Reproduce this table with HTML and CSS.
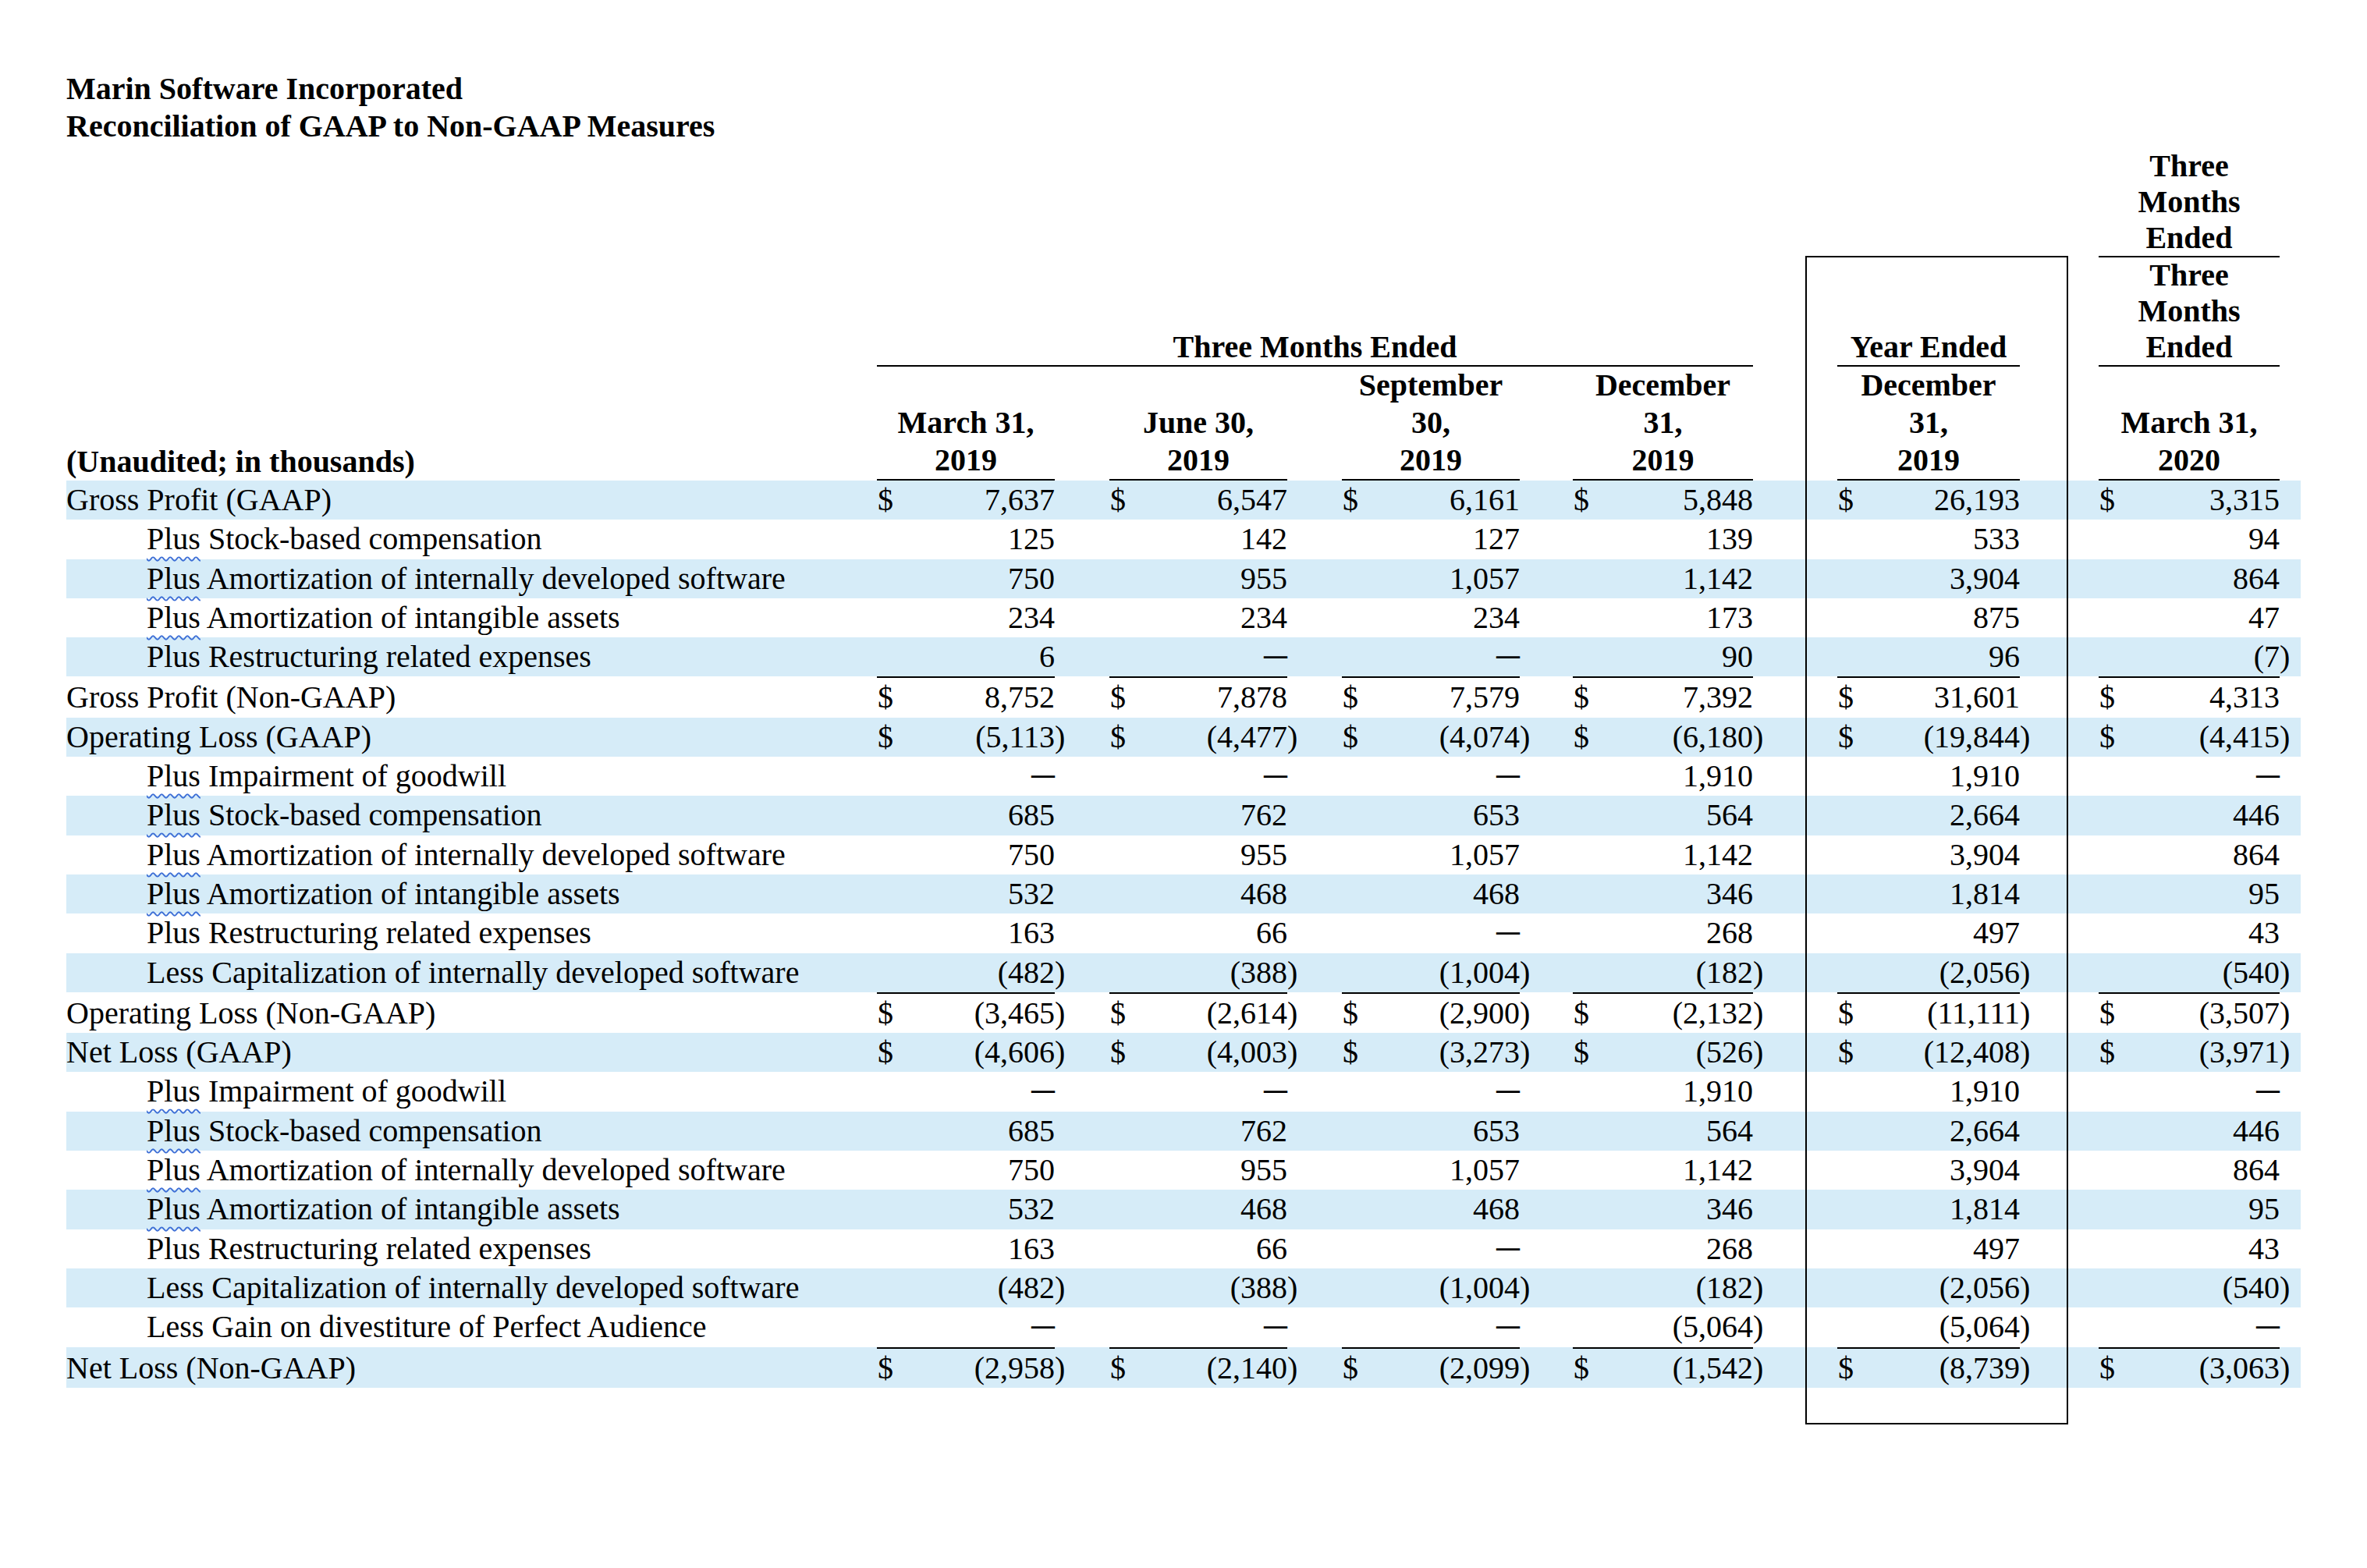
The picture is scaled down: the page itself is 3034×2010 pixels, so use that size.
FILE: index.html
```html
<!DOCTYPE html>
<html lang="en">
<head>
<meta charset="utf-8">
<title>Marin Software Incorporated - Reconciliation of GAAP to Non-GAAP Measures</title>
<link rel="stylesheet" href="styles.css">
</head>
<body>
<div class="page">
  <div class="title">Marin Software Incorporated<br>Reconciliation of GAAP to Non-GAAP Measures</div>
  <div class="wrap">
    <table class="rec">
      <colgroup>
        <col class="w-lab">
        <col class="w-num"><col class="w-par"><col class="w-sp">
        <col class="w-num"><col class="w-par"><col class="w-sp">
        <col class="w-num"><col class="w-par"><col class="w-sp3">
        <col class="w-num4"><col class="w-par"><col class="w-sp4">
        <col class="w-numy"><col class="w-par"><col class="w-spy">
        <col class="w-numl"><col class="w-par"><col class="w-tail">
      </colgroup>
      <thead>
        <tr class="ha">
          <td colspan="16"></td>
          <th class="ul">Three<br>Months<br>Ended</th>
          <td></td><td></td>
        </tr>
        <tr class="hb">
          <td></td>
          <th colspan="10" class="ul">Three Months Ended</th>
          <td></td><td></td>
          <th class="ul">Year Ended</th>
          <td></td><td></td>
          <th class="ul">Three<br>Months<br>Ended</th>
          <td></td><td></td>
        </tr>
        <tr class="hc">
          <th class="lab-h">(Unaudited; in thousands)</th>
          <th class="ul">March 31,<br>2019</th><td></td><td></td>
          <th class="ul">June 30,<br>2019</th><td></td><td></td>
          <th class="ul">September<br>30,<br>2019</th><td></td><td></td>
          <th class="ul">December<br>31,<br>2019</th><td></td><td></td>
          <th class="ul">December<br>31,<br>2019</th><td></td><td></td>
          <th class="ul">March 31,<br>2020</th><td></td><td></td>
        </tr>
      </thead>
      <tbody>
        <tr class="band">
          <td class="lab">Gross Profit (GAAP)</td>
          <td class="num"><span class="cur">$</span>7,637</td><td class="par"></td><td></td>
          <td class="num"><span class="cur">$</span>6,547</td><td class="par"></td><td></td>
          <td class="num"><span class="cur">$</span>6,161</td><td class="par"></td><td></td>
          <td class="num"><span class="cur">$</span>5,848</td><td class="par"></td><td></td>
          <td class="num"><span class="cur">$</span>26,193</td><td class="par"></td><td></td>
          <td class="num"><span class="cur">$</span>3,315</td><td class="par"></td><td></td>
        </tr>
        <tr>
          <td class="lab sub"><span class="sq">Plus</span> Stock-based compensation</td>
          <td class="num">125</td><td class="par"></td><td></td>
          <td class="num">142</td><td class="par"></td><td></td>
          <td class="num">127</td><td class="par"></td><td></td>
          <td class="num">139</td><td class="par"></td><td></td>
          <td class="num">533</td><td class="par"></td><td></td>
          <td class="num">94</td><td class="par"></td><td></td>
        </tr>
        <tr class="band">
          <td class="lab sub"><span class="sq">Plus</span> Amortization of internally developed software</td>
          <td class="num">750</td><td class="par"></td><td></td>
          <td class="num">955</td><td class="par"></td><td></td>
          <td class="num">1,057</td><td class="par"></td><td></td>
          <td class="num">1,142</td><td class="par"></td><td></td>
          <td class="num">3,904</td><td class="par"></td><td></td>
          <td class="num">864</td><td class="par"></td><td></td>
        </tr>
        <tr>
          <td class="lab sub"><span class="sq">Plus</span> Amortization of intangible assets</td>
          <td class="num">234</td><td class="par"></td><td></td>
          <td class="num">234</td><td class="par"></td><td></td>
          <td class="num">234</td><td class="par"></td><td></td>
          <td class="num">173</td><td class="par"></td><td></td>
          <td class="num">875</td><td class="par"></td><td></td>
          <td class="num">47</td><td class="par"></td><td></td>
        </tr>
        <tr class="band">
          <td class="lab sub">Plus Restructuring related expenses</td>
          <td class="num">6</td><td class="par"></td><td></td>
          <td class="num"><span class="dash">—</span></td><td class="par"></td><td></td>
          <td class="num"><span class="dash">—</span></td><td class="par"></td><td></td>
          <td class="num">90</td><td class="par"></td><td></td>
          <td class="num">96</td><td class="par"></td><td></td>
          <td class="num">(7</td><td class="par">)</td><td></td>
        </tr>
        <tr class="tot">
          <td class="lab">Gross Profit (Non-GAAP)</td>
          <td class="num"><span class="cur">$</span>8,752</td><td class="par"></td><td></td>
          <td class="num"><span class="cur">$</span>7,878</td><td class="par"></td><td></td>
          <td class="num"><span class="cur">$</span>7,579</td><td class="par"></td><td></td>
          <td class="num"><span class="cur">$</span>7,392</td><td class="par"></td><td></td>
          <td class="num"><span class="cur">$</span>31,601</td><td class="par"></td><td></td>
          <td class="num"><span class="cur">$</span>4,313</td><td class="par"></td><td></td>
        </tr>
        <tr class="band">
          <td class="lab">Operating Loss (GAAP)</td>
          <td class="num"><span class="cur">$</span>(5,113</td><td class="par">)</td><td></td>
          <td class="num"><span class="cur">$</span>(4,477</td><td class="par">)</td><td></td>
          <td class="num"><span class="cur">$</span>(4,074</td><td class="par">)</td><td></td>
          <td class="num"><span class="cur">$</span>(6,180</td><td class="par">)</td><td></td>
          <td class="num"><span class="cur">$</span>(19,844</td><td class="par">)</td><td></td>
          <td class="num"><span class="cur">$</span>(4,415</td><td class="par">)</td><td></td>
        </tr>
        <tr>
          <td class="lab sub"><span class="sq">Plus</span> Impairment of goodwill</td>
          <td class="num"><span class="dash">—</span></td><td class="par"></td><td></td>
          <td class="num"><span class="dash">—</span></td><td class="par"></td><td></td>
          <td class="num"><span class="dash">—</span></td><td class="par"></td><td></td>
          <td class="num">1,910</td><td class="par"></td><td></td>
          <td class="num">1,910</td><td class="par"></td><td></td>
          <td class="num"><span class="dash">—</span></td><td class="par"></td><td></td>
        </tr>
        <tr class="band">
          <td class="lab sub"><span class="sq">Plus</span> Stock-based compensation</td>
          <td class="num">685</td><td class="par"></td><td></td>
          <td class="num">762</td><td class="par"></td><td></td>
          <td class="num">653</td><td class="par"></td><td></td>
          <td class="num">564</td><td class="par"></td><td></td>
          <td class="num">2,664</td><td class="par"></td><td></td>
          <td class="num">446</td><td class="par"></td><td></td>
        </tr>
        <tr>
          <td class="lab sub"><span class="sq">Plus</span> Amortization of internally developed software</td>
          <td class="num">750</td><td class="par"></td><td></td>
          <td class="num">955</td><td class="par"></td><td></td>
          <td class="num">1,057</td><td class="par"></td><td></td>
          <td class="num">1,142</td><td class="par"></td><td></td>
          <td class="num">3,904</td><td class="par"></td><td></td>
          <td class="num">864</td><td class="par"></td><td></td>
        </tr>
        <tr class="band">
          <td class="lab sub"><span class="sq">Plus</span> Amortization of intangible assets</td>
          <td class="num">532</td><td class="par"></td><td></td>
          <td class="num">468</td><td class="par"></td><td></td>
          <td class="num">468</td><td class="par"></td><td></td>
          <td class="num">346</td><td class="par"></td><td></td>
          <td class="num">1,814</td><td class="par"></td><td></td>
          <td class="num">95</td><td class="par"></td><td></td>
        </tr>
        <tr>
          <td class="lab sub">Plus Restructuring related expenses</td>
          <td class="num">163</td><td class="par"></td><td></td>
          <td class="num">66</td><td class="par"></td><td></td>
          <td class="num"><span class="dash">—</span></td><td class="par"></td><td></td>
          <td class="num">268</td><td class="par"></td><td></td>
          <td class="num">497</td><td class="par"></td><td></td>
          <td class="num">43</td><td class="par"></td><td></td>
        </tr>
        <tr class="band">
          <td class="lab sub">Less Capitalization of internally developed software</td>
          <td class="num">(482</td><td class="par">)</td><td></td>
          <td class="num">(388</td><td class="par">)</td><td></td>
          <td class="num">(1,004</td><td class="par">)</td><td></td>
          <td class="num">(182</td><td class="par">)</td><td></td>
          <td class="num">(2,056</td><td class="par">)</td><td></td>
          <td class="num">(540</td><td class="par">)</td><td></td>
        </tr>
        <tr class="tot">
          <td class="lab">Operating Loss (Non-GAAP)</td>
          <td class="num"><span class="cur">$</span>(3,465</td><td class="par">)</td><td></td>
          <td class="num"><span class="cur">$</span>(2,614</td><td class="par">)</td><td></td>
          <td class="num"><span class="cur">$</span>(2,900</td><td class="par">)</td><td></td>
          <td class="num"><span class="cur">$</span>(2,132</td><td class="par">)</td><td></td>
          <td class="num"><span class="cur">$</span>(11,111</td><td class="par">)</td><td></td>
          <td class="num"><span class="cur">$</span>(3,507</td><td class="par">)</td><td></td>
        </tr>
        <tr class="band">
          <td class="lab">Net Loss (GAAP)</td>
          <td class="num"><span class="cur">$</span>(4,606</td><td class="par">)</td><td></td>
          <td class="num"><span class="cur">$</span>(4,003</td><td class="par">)</td><td></td>
          <td class="num"><span class="cur">$</span>(3,273</td><td class="par">)</td><td></td>
          <td class="num"><span class="cur">$</span>(526</td><td class="par">)</td><td></td>
          <td class="num"><span class="cur">$</span>(12,408</td><td class="par">)</td><td></td>
          <td class="num"><span class="cur">$</span>(3,971</td><td class="par">)</td><td></td>
        </tr>
        <tr>
          <td class="lab sub"><span class="sq">Plus</span> Impairment of goodwill</td>
          <td class="num"><span class="dash">—</span></td><td class="par"></td><td></td>
          <td class="num"><span class="dash">—</span></td><td class="par"></td><td></td>
          <td class="num"><span class="dash">—</span></td><td class="par"></td><td></td>
          <td class="num">1,910</td><td class="par"></td><td></td>
          <td class="num">1,910</td><td class="par"></td><td></td>
          <td class="num"><span class="dash">—</span></td><td class="par"></td><td></td>
        </tr>
        <tr class="band">
          <td class="lab sub"><span class="sq">Plus</span> Stock-based compensation</td>
          <td class="num">685</td><td class="par"></td><td></td>
          <td class="num">762</td><td class="par"></td><td></td>
          <td class="num">653</td><td class="par"></td><td></td>
          <td class="num">564</td><td class="par"></td><td></td>
          <td class="num">2,664</td><td class="par"></td><td></td>
          <td class="num">446</td><td class="par"></td><td></td>
        </tr>
        <tr>
          <td class="lab sub"><span class="sq">Plus</span> Amortization of internally developed software</td>
          <td class="num">750</td><td class="par"></td><td></td>
          <td class="num">955</td><td class="par"></td><td></td>
          <td class="num">1,057</td><td class="par"></td><td></td>
          <td class="num">1,142</td><td class="par"></td><td></td>
          <td class="num">3,904</td><td class="par"></td><td></td>
          <td class="num">864</td><td class="par"></td><td></td>
        </tr>
        <tr class="band">
          <td class="lab sub"><span class="sq">Plus</span> Amortization of intangible assets</td>
          <td class="num">532</td><td class="par"></td><td></td>
          <td class="num">468</td><td class="par"></td><td></td>
          <td class="num">468</td><td class="par"></td><td></td>
          <td class="num">346</td><td class="par"></td><td></td>
          <td class="num">1,814</td><td class="par"></td><td></td>
          <td class="num">95</td><td class="par"></td><td></td>
        </tr>
        <tr>
          <td class="lab sub">Plus Restructuring related expenses</td>
          <td class="num">163</td><td class="par"></td><td></td>
          <td class="num">66</td><td class="par"></td><td></td>
          <td class="num"><span class="dash">—</span></td><td class="par"></td><td></td>
          <td class="num">268</td><td class="par"></td><td></td>
          <td class="num">497</td><td class="par"></td><td></td>
          <td class="num">43</td><td class="par"></td><td></td>
        </tr>
        <tr class="band">
          <td class="lab sub">Less Capitalization of internally developed software</td>
          <td class="num">(482</td><td class="par">)</td><td></td>
          <td class="num">(388</td><td class="par">)</td><td></td>
          <td class="num">(1,004</td><td class="par">)</td><td></td>
          <td class="num">(182</td><td class="par">)</td><td></td>
          <td class="num">(2,056</td><td class="par">)</td><td></td>
          <td class="num">(540</td><td class="par">)</td><td></td>
        </tr>
        <tr>
          <td class="lab sub">Less Gain on divestiture of Perfect Audience</td>
          <td class="num"><span class="dash">—</span></td><td class="par"></td><td></td>
          <td class="num"><span class="dash">—</span></td><td class="par"></td><td></td>
          <td class="num"><span class="dash">—</span></td><td class="par"></td><td></td>
          <td class="num">(5,064</td><td class="par">)</td><td></td>
          <td class="num">(5,064</td><td class="par">)</td><td></td>
          <td class="num"><span class="dash">—</span></td><td class="par"></td><td></td>
        </tr>
        <tr class="band tot">
          <td class="lab">Net Loss (Non-GAAP)</td>
          <td class="num"><span class="cur">$</span>(2,958</td><td class="par">)</td><td></td>
          <td class="num"><span class="cur">$</span>(2,140</td><td class="par">)</td><td></td>
          <td class="num"><span class="cur">$</span>(2,099</td><td class="par">)</td><td></td>
          <td class="num"><span class="cur">$</span>(1,542</td><td class="par">)</td><td></td>
          <td class="num"><span class="cur">$</span>(8,739</td><td class="par">)</td><td></td>
          <td class="num"><span class="cur">$</span>(3,063</td><td class="par">)</td><td></td>
        </tr>
        <tr class="tail">
          <td colspan="19"></td>
        </tr>
      </tbody>
    </table>
    <div class="box"></div>
  </div>
</div>
</body>
</html>
```
FILE: styles.css
```css
* { box-sizing: border-box; }

html, body {
  margin: 0;
  padding: 0;
  background: #ffffff;
}

body {
  color: #000000;
  font-family: "Liberation Serif", "Times New Roman", serif;
  font-size: 40px;
}

.page {
  padding: 90px 0 0 85px;
}

.title {
  font-weight: bold;
  line-height: 48px;
  margin-bottom: 4px;
}

.wrap {
  position: relative;
  width: 2864px;
}

table.rec {
  table-layout: fixed;
  width: 2864px;
  border-collapse: separate;
  border-spacing: 0;
}

table.rec td,
table.rec th {
  padding: 0;
}

/* column widths */
.w-lab { width: 1039px; }
.w-num { width: 228px; }
.w-num4 { width: 231px; }
.w-numy { width: 234px; }
.w-numl { width: 232px; }
.w-par { width: 18px; }
.w-sp { width: 52px; }
.w-sp3 { width: 50px; }
.w-sp4 { width: 90px; }
.w-spy { width: 83px; }
.w-tail { width: 9px; }

/* header */
thead th {
  font-weight: bold;
  text-align: center;
  vertical-align: bottom;
  line-height: 46px;
}

thead th.ul {
  border-bottom: 2px solid #000;
}

.hb th {
  padding-top: 3px;
}

.hc th {
  line-height: 48px;
  padding-top: 1px;
}

.hc th.lab-h {
  text-align: left;
}

/* body rows */
tbody td {
  line-height: 50.3px;
  vertical-align: baseline;
  white-space: nowrap;
}

tbody tr.band {
  background: #d6ecf8;
}

tbody tr.tail td {
  height: 47px;
  line-height: 47px;
}

td.lab.sub {
  padding-left: 103px;
}

td.num {
  text-align: right;
  padding-right: 4px;
}

td.par {
  text-align: left;
}

.cur {
  float: left;
  padding-left: 1px;
}

tr.tot td.num {
  border-top: 2px solid #000;
}

.sq {
  text-decoration: underline wavy #3d6fd6;
  text-decoration-thickness: 1.5px;
  text-underline-offset: 9px;
}

.dash {
  display: inline-block;
  font-weight: bold;
  transform: translateY(-3px) scaleX(0.75);
  transform-origin: right center;
}

.box {
  position: absolute;
  left: 2229px;
  top: 138px;
  bottom: 0;
  width: 337px;
  border: 2px solid #000;
  pointer-events: none;
}
```
